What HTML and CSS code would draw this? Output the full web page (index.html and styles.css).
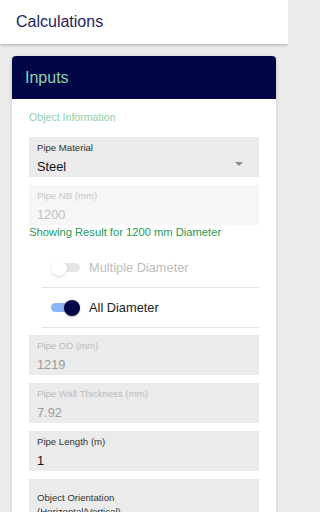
FILE: index.html
```html
<!DOCTYPE html>
<html>
<head>
<meta charset="utf-8">
<link rel="stylesheet" href="styles.css">
</head>
<body>
<header class="topbar"><span class="title">Calculations</span></header>
<main class="content">
  <section class="card">
    <div class="card-head">Inputs</div>
    <div class="card-body">
      <div class="section-title">Object Information</div>
      <div class="field">
        <div class="field-main">
          <div class="label">Pipe Material</div>
          <div class="value">Steel</div>
        </div>
        <span class="caret"></span>
      </div>
      <div class="field faint">
        <div class="field-main">
          <div class="label">Pipe NB (mm)</div>
          <div class="value">1200</div>
        </div>
      </div>
      <div class="note">Showing Result for 1200 mm Diameter</div>
      <div class="toggles">
        <div class="toggle-row off">
          <span class="switch"><span class="knob"></span></span>
          <span class="toggle-text">Multiple Diameter</span>
        </div>
        <div class="toggle-row on">
          <span class="switch"><span class="knob"></span></span>
          <span class="toggle-text">All Diameter</span>
        </div>
      </div>
      <div class="fields">
        <div class="field disabled">
          <div class="field-main">
            <div class="label">Pipe OD (mm)</div>
            <div class="value">1219</div>
          </div>
        </div>
        <div class="field disabled">
          <div class="field-main">
            <div class="label">Pipe Wall Thickness (mm)</div>
            <div class="value">7.92</div>
          </div>
        </div>
        <div class="field">
          <div class="field-main">
            <div class="label">Pipe Length (m)</div>
            <div class="value">1</div>
          </div>
        </div>
        <div class="field tall">
          <div class="field-main">
            <div class="label wrap">Object Orientation<br>(Horizontal/Vertical)</div>
          </div>
        </div>
      </div>
    </div>
  </section>
</main>
</body>
</html>
```

FILE: styles.css
```css
html, body {
  margin: 0;
  padding: 0;
}
body {
  background: #ebebeb;
  font-family: "Liberation Sans", Arial, sans-serif;
  width: 288px;
  height: 512px;
  overflow: hidden;
}
.topbar {
  height: 44px;
  background: #ffffff;
  box-shadow: 0 1px 3px rgba(0, 0, 0, 0.28);
  display: flex;
  align-items: center;
  padding-left: 16px;
  position: relative;
  z-index: 1;
}
.title {
  font-size: 16px;
  line-height: 44px;
  color: #23245c;
}
.content {
  padding: 12px 12px 0;
}
.card {
  border-radius: 4px 4px 0 0;
  background: #ffffff;
  box-shadow: 0 1px 3px rgba(0, 0, 0, 0.22);
}
.card-head {
  height: 43px;
  background: #000646;
  border-radius: 4px 4px 0 0;
  color: #8ed3a8;
  font-size: 16px;
  line-height: 44px;
  padding-left: 13px;
}
.card-body {
  padding: 10px 17px 20px;
}
.section-title {
  font-size: 10.6px;
  line-height: 16px;
  color: #8fd1a6;
  margin-bottom: 12px;
}
.field {
  height: 40px;
  box-sizing: border-box;
  background: #ebebeb;
  padding: 5px 16px 0 8px;
  display: flex;
  margin-bottom: 8px;
}
.field-main {
  flex: 1;
}
.label {
  font-size: 9.6px;
  line-height: 12px;
  color: #333333;
}
.value {
  font-size: 12.8px;
  line-height: 16px;
  margin-top: 5px;
  color: #111111;
}
.caret {
  align-self: center;
  margin-top: 8px;
  width: 0;
  height: 0;
  border-left: 4px solid transparent;
  border-right: 4px solid transparent;
  border-top: 4px solid #8a8a8a;
}
.field.faint {
  background: #f6f6f6;
  margin-bottom: 0;
}
.field.faint .label {
  color: #c6c6c6;
}
.field.faint .value {
  color: #c2c2c2;
}
.field.disabled .label {
  color: #bbbbbb;
}
.field.disabled .value {
  color: #9c9c9c;
}
.field.tall {
  height: 60px;
  padding-top: 12px;
}
.label.wrap {
  line-height: 14px;
}
.note {
  font-size: 11.2px;
  line-height: 14px;
  color: #1f9a55;
}
.toggles {
  margin: 9px 0 7px 13px;
}
.toggle-row {
  height: 39px;
  border-bottom: 1px solid #e2e2e2;
  display: flex;
  align-items: center;
  padding-left: 9px;
}
.switch {
  width: 29px;
  height: 9px;
  border-radius: 5px;
  display: flex;
  align-items: center;
  margin-right: 9px;
}
.knob {
  width: 16px;
  height: 16px;
  border-radius: 50%;
  flex: none;
}
.toggle-row.off .switch {
  background: #e6e6e6;
  justify-content: flex-start;
}
.toggle-row.off .knob {
  background: #ffffff;
  box-shadow: 0 1px 2px rgba(0, 0, 0, 0.18);
}
.toggle-row.on .switch {
  background: #8db4f7;
  justify-content: flex-end;
}
.toggle-row.on .knob {
  background: #000646;
  box-shadow: 0 1px 2px rgba(0, 0, 0, 0.3);
}
.toggle-text {
  font-size: 12.8px;
  color: #222222;
}
.toggle-row.off .toggle-text {
  color: #bdbdbd;
}
```
